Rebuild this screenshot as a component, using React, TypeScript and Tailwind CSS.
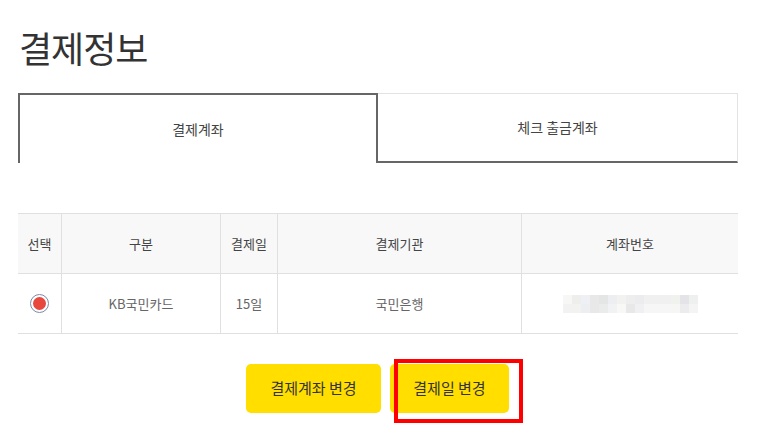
const blurTop = [
  "bg-[#f7f7f5]", "bg-[#eeeeec]", "bg-[#eef0f5]", "bg-[#e8e8e8]", "bg-[#e4e6e6]",
  "bg-[#eceef2]", "bg-[#f2f2f0]", "bg-[#eeeeee]", "bg-[#ececee]", "bg-[#f0f0f0]",
  "bg-[#f0f0f0]", "bg-[#f0f0f0]", "bg-[#f0f2ee]", "bg-[#e4e4e8]", "bg-[#eef0f0]",
];
const blurBottom = [
  "bg-[#f2f2f2]", "bg-[#f2f2f0]", "bg-[#eceef2]", "bg-[#e8e8e8]", "bg-[#eaecec]",
  "bg-[#f0f2f4]", "bg-[#f8f8f6]", "bg-[#e8e8e8]", "bg-[#f0f0f2]", "bg-[#f6f6f6]",
  "bg-[#f6f6f6]", "bg-[#f6f6f6]", "bg-[#f6f6f4]", "bg-[#ececee]", "bg-[#f4f4f4]",
];

function App() {
  return (
    <div className="w-[757px] h-[444px] bg-white pl-[18px] text-[#333] overflow-hidden" style={{ fontFamily: '"Noto Sans CJK KR", "Noto Sans", sans-serif' }}>
      <h1 className="pt-[21px] h-[93px] pl-[1px] text-[36px] leading-[52px] font-normal tracking-[-1px] text-[#333]">결제정보</h1>

      {/* tabs */}
      <div className="flex w-[720px] h-[70px]">
        <div className="w-[360px] border-t-2 border-l-2 border-r-2 border-[#666] flex items-center justify-center text-[14px] text-[#444]">
          결제계좌
        </div>
        <div className="flex-1 border-t border-r border-t-[#e3e3e3] border-r-[#e3e3e3] border-b-2 border-b-[#666] flex items-center justify-center text-[14px] text-[#444]">
          체크 출금계좌
        </div>
      </div>

      {/* table */}
      <div className="mt-[50px] w-[720px] border-t border-b border-[#e0e0e0] text-[13px] text-[#444]">
        <div className="flex h-[60px] bg-[#f8f8f8] border-b border-[#e0e0e0]">
          <div className="w-[44px] flex items-center justify-center border-r border-[#e0e0e0]">선택</div>
          <div className="w-[159px] flex items-center justify-center border-r border-[#e0e0e0]">구분</div>
          <div className="w-[57px] flex items-center justify-center border-r border-[#e0e0e0]">결제일</div>
          <div className="w-[244px] flex items-center justify-center border-r border-[#e0e0e0]">결제기관</div>
          <div className="flex-1 flex items-center justify-center">계좌번호</div>
        </div>
        <div className="flex h-[59px]">
          <div className="w-[44px] flex items-center justify-center border-r border-[#e0e0e0]">
            <span className="w-[19px] h-[19px] rounded-full border border-[#7b8aa8] bg-white flex items-center justify-center">
              <span className="w-[13px] h-[13px] rounded-full bg-[#e7473c]" />
            </span>
          </div>
          <div className="w-[159px] flex items-center justify-center border-r border-[#e0e0e0] text-[#666]">KB국민카드</div>
          <div className="w-[57px] flex items-center justify-center border-r border-[#e0e0e0] text-[#666]">15일</div>
          <div className="w-[244px] flex items-center justify-center border-r border-[#e0e0e0] text-[#666]">국민은행</div>
          <div className="flex-1 flex items-center justify-center">
            <div className="flex flex-col w-[135px] mt-[1px]">
              <div className="flex">
                {blurTop.map((c, i) => (
                  <span key={i} className={`w-[9px] h-[9px] ${c}`} />
                ))}
              </div>
              <div className="flex">
                {blurBottom.map((c, i) => (
                  <span key={i} className={`w-[9px] h-[9px] ${c}`} />
                ))}
              </div>
            </div>
          </div>
        </div>
      </div>

      {/* buttons */}
      <div className="mt-[30px] flex justify-center gap-[9px] w-[720px] pr-[1px]">
        <button className="w-[135px] h-[49px] rounded-[5px] bg-[#ffde00] text-[15px] font-normal text-[#333]">결제계좌 변경</button>
        <div className="relative">
          <button className="w-[119px] h-[49px] rounded-[5px] bg-[#ffde00] text-[15px] font-normal text-[#333]">결제일 변경</button>
          <div className="absolute left-[4px] top-[-5px] w-[129px] h-[64px] border-4 border-[#ff0000]" />
        </div>
      </div>
    </div>
  );
}

export default App;
